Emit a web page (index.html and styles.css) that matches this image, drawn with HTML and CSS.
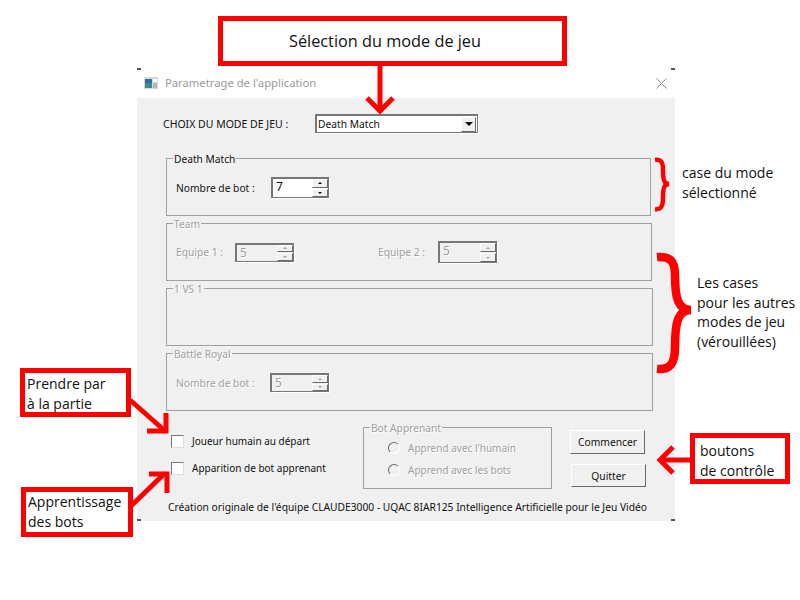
FILE: index.html
```html
<!DOCTYPE html>
<html lang="fr">
<head>
<meta charset="utf-8">
<title>Parametrage de l'application</title>
<link rel="stylesheet" href="styles.css">
</head>
<body>
<div class="stage">
  <section class="dialog">
    <span class="corner corner-tl"></span><span class="corner corner-tr"></span>
    <span class="corner corner-bl"></span><span class="corner corner-br"></span>
    <header class="titlebar">
      <svg class="app-icon" width="14" height="12" viewBox="0 0 14 12">
        <rect width="14" height="12" fill="#d3d8dc"/>
        <rect x="1" y="2" width="7" height="9" fill="#3f8f7f"/>
        <rect x="1" y="2" width="7" height="4" fill="#2f6fa8"/>
        <rect x="9" y="2" width="4" height="3" fill="#fff"/>
        <rect x="9" y="6" width="4" height="5" fill="#b0b8c0"/>
      </svg>
      <span class="title">Parametrage de l'application</span>
      <svg class="close" width="11" height="11" viewBox="0 0 11 11">
        <path d="M0.5 0.5L10.5 10.5M10.5 0.5L0.5 10.5" stroke="#8a8a8a" stroke-width="1" fill="none"/>
      </svg>
    </header>
    <div class="client">
      <div class="mode-row">
        <span class="mode-label">CHOIX DU MODE DE JEU :</span>
        <div class="combo">
          <span class="combo-value">Death Match</span>
          <span class="combo-btn"><i class="tri-down"></i></span>
        </div>
      </div>
      <div class="groups">
        <fieldset class="group w485 pad-dm">
          <legend>Death Match</legend>
          <div class="line">
            <span class="cell-95">Nombre de bot :</span>
            <div class="spin"><span class="spin-value">7</span><span class="spin-btns"><b><i class="tri-up"></i></b><b><i class="tri-down small"></i></b></span></div>
          </div>
        </fieldset>
        <fieldset class="group w486 pad-team off">
          <legend>Team</legend>
          <div class="line">
            <span class="cell-59">Equipe 1 :</span>
            <div class="spin spin-short"><span class="spin-value">5</span><span class="spin-btns"><b><i class="tri-up"></i></b><b><i class="tri-down small"></i></b></span></div>
            <span class="cell-60 gap-84">Equipe 2 :</span>
            <div class="spin spin-tall"><span class="spin-value">5</span><span class="spin-btns"><b><i class="tri-up"></i></b><b><i class="tri-down small"></i></b></span></div>
          </div>
        </fieldset>
        <fieldset class="group w487 off">
          <legend>1 VS 1</legend>
        </fieldset>
        <fieldset class="group w487 pad-br off">
          <legend>Battle Royal</legend>
          <div class="line">
            <span class="cell-94">Nombre de bot :</span>
            <div class="spin spin-short"><span class="spin-value">5</span><span class="spin-btns"><b><i class="tri-up"></i></b><b><i class="tri-down small"></i></b></span></div>
          </div>
        </fieldset>
      </div>
      <div class="bottom">
        <div class="checks">
          <label class="check"><span class="box"></span>Joueur humain au départ</label>
          <label class="check"><span class="box"></span>Apparition de bot apprenant</label>
        </div>
        <fieldset class="group bot off">
          <legend>Bot Apprenant</legend>
          <div class="radio"><span class="dot"></span>Apprend avec l'humain</div>
          <div class="radio"><span class="dot"></span>Apprend avec les bots</div>
        </fieldset>
        <div class="actions">
          <button class="btn" type="button">Commencer</button>
          <button class="btn btn-quit" type="button">Quitter</button>
        </div>
      </div>
      <p class="credit">Création originale de l'équipe CLAUDE3000 - UQAC 8IAR125 Intelligence Artificielle pour le Jeu Vidéo</p>
    </div>
  </section>

  <div class="callout c-top">Sélection du mode de jeu</div>
  <div class="callout c-part">Prendre par<br>à la partie</div>
  <div class="callout c-learn">Apprentissage<br>des bots</div>
  <div class="callout c-ctrl">boutons<br>de contrôle</div>
  <div class="note n-case">case du mode<br>sélectionné</div>
  <div class="note n-others">Les cases<br>pour les autres<br>modes de jeu<br>(vérouillées)</div>

  <svg class="marks" width="800" height="600" viewBox="0 0 800 600" fill="none" stroke="#ff0000">
    <g stroke-width="5">
      <path d="M380 66V110"/>
      <path d="M367 98L380 111L393 98"/>
      <path d="M130 400L164 430"/>
      <path d="M147 431H166V413"/>
      <path d="M131 506L165 473"/>
      <path d="M149 474H167V493"/>
      <path d="M690 460H660"/>
      <path d="M673 447L660 460L673 473"/>
    </g>
    <path stroke-width="4.5" d="M655 160C661 159 663 162 663 170C663 180 664 184 669 184C664 184 663 188 663 198C663 206 661 210 655 209"/>
    <path stroke-width="8.5" d="M657 257C670 256 675 261 675 275C675 298 678 310 691 310C678 310 675 322 675 347C675 364 670 370 657 369"/>
  </svg>
</div>
</body>
</html>
```
FILE: styles.css
```css
* { box-sizing: border-box; }
html, body { margin: 0; background: #fff; }
.stage { position: relative; width: 800px; height: 600px; overflow: hidden; font-family: "Noto Sans", sans-serif; }

/* Window */
.dialog { position: absolute; left: 137px; top: 68px; width: 538px; height: 453px; display: flex; flex-direction: column; font-size: 10.25px; color: #111; }
.corner { position: absolute; width: 4px; height: 2px; background: #555; }
.corner-tl { left: 0; top: 0; }
.corner-tr { right: 0; top: 0; }
.corner-bl { left: 0; bottom: 0; }
.corner-br { right: 0; bottom: 0; }
.titlebar { height: 30px; flex: none; display: flex; align-items: center; padding: 0 8px 0 7px; }
.app-icon { flex: none; margin-right: 7px; }
.title { font-size: 11.25px; color: #999; margin-bottom: 2px; }
.close { margin-left: auto; }
.client { flex: 1; background: #f0f0f0; padding: 16px 0 0 26px; }

/* Mode row */
.mode-row { display: flex; align-items: center; height: 19px; }
.mode-label { width: 152px; font-size: 10.5px; }
.combo { width: 163px; height: 19px; display: flex; align-items: center; background: #fff; border: solid #777; border-width: 2px 1px 1px 2px; box-shadow: 1px 1px 0 #fff; }
.combo-value { flex: 1; padding-left: 1px; font-size: 10.25px; }
.combo-btn { width: 15px; height: 15px; margin-right: 1px; display: flex; align-items: center; justify-content: center; background: #f0f0f0; border: solid; border-color: #fff #696969 #696969 #fff; border-width: 1px; }
.tri-down { display: block; width: 0; height: 0; border: 4px solid transparent; border-top-color: #000; border-bottom-width: 0; }
.tri-down.small, .tri-up { border-width: 2px; }
.tri-down.small { border-bottom-width: 0; }
.tri-up { display: block; width: 0; height: 0; border-style: solid; border-color: transparent; border-bottom-color: #000; border-top-width: 0; }

/* Group boxes */
.groups { margin: 18px 0 0 3px; }
.group { margin: 0; padding: 0 0 0 9px; height: 65px; border: 1px solid #a0a0a0; min-width: 0; display: block; }
.group legend { margin-left: -3px; padding: 2px 1px 0; line-height: 13px; font-size: 10.2px; }
.w485 { width: 485px; }
.w486 { width: 486px; }
.w487 { width: 487px; }
.pad-dm { padding-top: 11px; }
.pad-team { padding-top: 10px; }
.pad-br { padding-top: 12px; }
.line { display: flex; align-items: center; height: 22px; }
.pad-dm .line { height: 21px; }
.pad-br .line { height: 19px; }
.cell-95 { width: 95px; }
.cell-94 { width: 94px; }
.cell-59 { width: 59px; }
.cell-60 { width: 60px; }
.gap-84 { margin-left: 84px; }
.off, .off legend { color: #a0a0a0; }
.off legend, .off span, .off .radio { text-shadow: 1px 1px 0 #fff; }

/* Spin */
.spin { width: 58px; height: 21px; display: flex; align-items: stretch; background: #fff; border: solid #777; border-width: 2px 1px 1px 2px; box-shadow: 1px 1px 0 #fff; }
.spin-short { width: 59px; height: 19px; background: #f0f0f0; }
.spin-tall { width: 59px; height: 22px; background: #f0f0f0; }
.spin-value { flex: 1; padding-left: 3px; font-size: 12px; line-height: 15px; color: #111; }
.off .spin-value { color: #a0a0a0; }
.spin-btns { width: 16px; display: flex; flex-direction: column; gap: 1px; }
.spin-btns b { flex: 1; display: flex; align-items: center; justify-content: center; background: #f0f0f0; border-right: 1px solid #696969; border-bottom: 1px solid #696969; border-left: 1px solid #fff; border-top: 1px solid #fff; }
.off .tri-up { border-bottom-color: #a0a0a0; }
.off .tri-down { border-top-color: #a0a0a0; }

/* Bottom */
.bottom { display: flex; margin-top: 9px; }
.checks { width: 200px; padding: 14px 0 0 8px; display: flex; flex-direction: column; gap: 13px; font-size: 10px; }
.check { display: flex; align-items: center; height: 14px; }
.box { width: 13px; height: 13px; margin-right: 8px; background: #fff; border: solid; border-width: 1px; border-color: #777 #ddd #ddd #777; }
.bot { width: 189px; height: 69px; padding: 2px 0 0 24px; flex: none; font-size: 10px; }
.bot legend { margin-left: -18px; }
.radio { display: flex; align-items: center; height: 22px; }
.dot { width: 12px; height: 12px; margin-right: 8px; border-radius: 50%; background: #f0f0f0; border: 1px solid; border-color: #696969 #fff #fff #696969; }
.actions { margin-left: 18px; padding-top: 10px; display: flex; flex-direction: column; gap: 10px; }
.btn { width: 75px; height: 24px; padding: 0; font: inherit; font-size: 10.25px; color: #111; background: #f0f0f0; border: 1px solid; border-color: #fff #696969 #696969 #fff; border-radius: 0; }
.btn-quit { height: 23px; margin-left: 1px; }
.credit { margin: 11px 0 0 5px; line-height: 15px; white-space: nowrap; }

/* Annotations */
.callout { position: absolute; background: #fff; border: 5px solid #f00; font-size: 14px; line-height: 20px; color: #111; font-family: "Open Sans", sans-serif; }
.c-top { left: 218px; top: 16px; width: 349px; height: 50px; padding-right: 15px; text-align: center; line-height: 40px; font-size: 16.3px; }
.c-part { left: 20px; top: 368px; width: 111px; height: 49px; padding: 1px 0 0 2px; }
.c-learn { left: 21px; top: 487px; width: 112px; height: 50px; padding: 0 0 0 2px; }
.c-ctrl { left: 690px; top: 433px; width: 100px; height: 51px; padding: 3px 0 0 5px; }
.note { position: absolute; font-family: "Open Sans", sans-serif; font-size: 14px; line-height: 19.7px; color: #111; }
.n-case { left: 682px; top: 163px; }
.n-others { left: 697px; top: 273px; }
.marks { position: absolute; left: 0; top: 0; pointer-events: none; }
```
